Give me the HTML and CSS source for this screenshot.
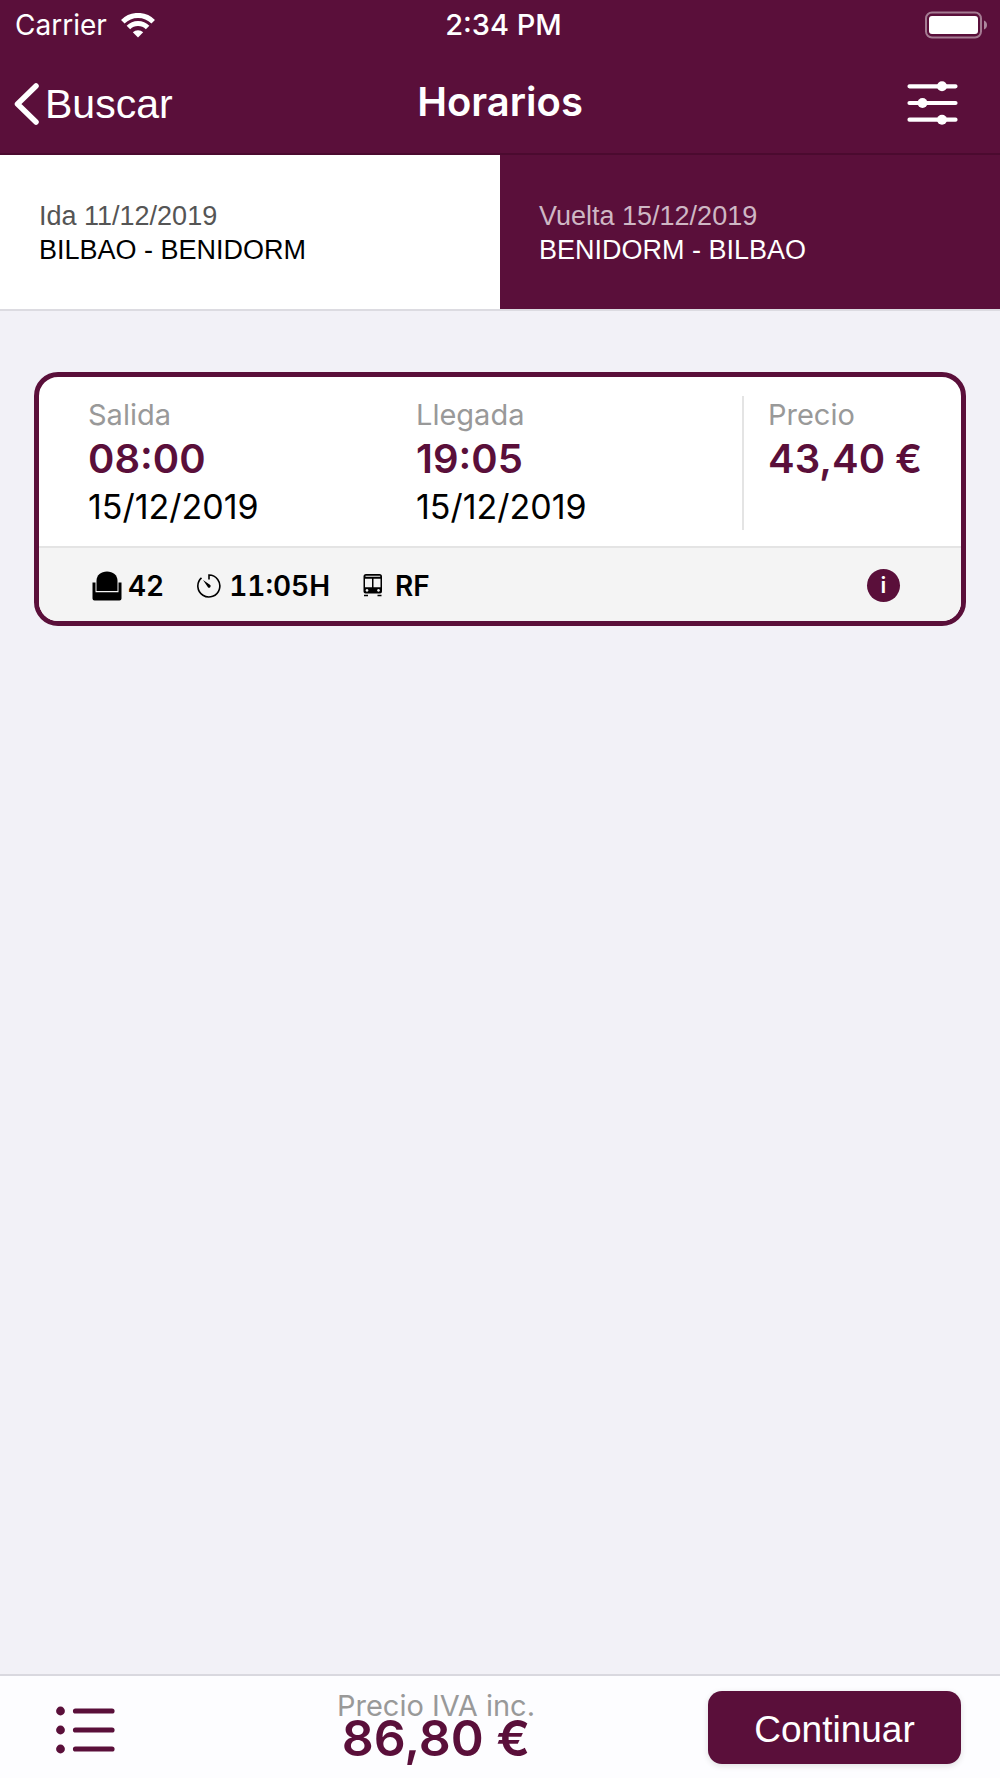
FILE: index.html
```html
<!DOCTYPE html>
<html lang="es">
<head>
<meta charset="utf-8">
<meta name="viewport" content="width=device-width, initial-scale=1">
<title>Horarios</title>
<link rel="stylesheet" href="styles.css">
</head>
<body>
<header class="header">
  <div class="status">
    <div class="carrier">
      <span>Carrier</span>
      <svg width="34" height="25" viewBox="0 0 34 25" aria-hidden="true">
        <g fill="none" stroke="#fff" stroke-width="5">
          <path d="M1.8 8.7a21.500 21.500 0 0 1 30.400 0"/>
          <path d="M7.400 14.400a13.600 13.600 0 0 1 19.200 0"/>
        </g>
        <path d="M17 24.500l-5.200-5.300a7.600 7.600 0 0 1 10.400 0z" fill="#fff"/>
      </svg>
    </div>
    <span class="clock">2:34 PM</span>
    <svg class="battery" width="64" height="28" viewBox="0 0 64 28" aria-hidden="true">
      <rect x="2" y="1.500" width="55" height="25" rx="6" fill="none" stroke="#fff" stroke-opacity=".45" stroke-width="2"/>
      <rect x="5" y="5" width="49" height="18" rx="3" fill="#fff"/>
      <path d="M60 9.500q3 1.200 3 4.500t-3 4.500z" fill="#fff" fill-opacity=".5"/>
    </svg>
  </div>
  <nav class="navbar">
    <a class="back" href="#buscar">
      <svg width="26" height="42" viewBox="0 0 26 42" aria-hidden="true"><path d="M23 3L4.500 21 23 39" fill="none" stroke="#fff" stroke-width="5.500" stroke-linecap="round" stroke-linejoin="round"/></svg>
      <span>Buscar</span>
    </a>
    <h1 class="title">Horarios</h1>
    <button class="icon-button filter" type="button" aria-label="Filtros">
      <svg width="52" height="44" viewBox="0 0 52 44">
        <path d="M2.500 5.300h46M2.500 22h46M2.500 38.700h46" stroke="#fff" stroke-width="4.200" stroke-linecap="round"/>
        <g fill="#fff"><circle cx="35" cy="5.300" r="5"/><circle cx="15.500" cy="22" r="5"/><circle cx="35" cy="38.700" r="5"/></g>
      </svg>
    </button>
  </nav>
</header>

<div class="tabs">
  <button class="tab" type="button"><span class="tab-date">Ida 11/12/2019</span><span>BILBAO - BENIDORM</span></button>
  <button class="tab tab-active" type="button"><span class="tab-date">Vuelta 15/12/2019</span><span>BENIDORM - BILBAO</span></button>
</div>

<main class="content">
  <article class="trip">
    <div class="trip-main">
      <div class="col"><span class="label">Salida</span><strong class="value">08:00</strong><span class="date">15/12/2019</span></div>
      <div class="col"><span class="label">Llegada</span><strong class="value">19:05</strong><span class="date">15/12/2019</span></div>
      <div class="col col-price"><span class="label">Precio</span><strong class="value">43,40 €</strong></div>
    </div>
    <div class="trip-info">
      <span class="fact seats">
        <svg width="30" height="30" viewBox="0 0 30 30" aria-hidden="true">
          <path d="M4.500 20V10C4.500 4 9 .500 15 .500S25.500 4 25.500 10v10z"/>
          <path d="M.500 11.500h3v9.800h23v-9.800h3V27.500a2 2 0 0 1-2 2H2.500a2 2 0 0 1-2-2z"/>
        </svg>
        42
      </span>
      <span class="fact duration">
        <svg width="24" height="24" viewBox="0 0 24 24" aria-hidden="true">
          <path d="M12 5.500V1a11 11 0 1 1-7.500 2.800" fill="none" stroke="#000" stroke-width="1.600"/>
          <path d="M6 6l7.300 5a1.700 1.700 0 0 1-2.200 2.500z"/>
        </svg>
        11:05H
      </span>
      <span class="fact bus">
        <svg width="20" height="23" viewBox="0 0 20 23" aria-hidden="true">
          <path fill-rule="evenodd" d="M3 0h13.500a2.500 2.500 0 0 1 2.500 2.500V17.500a2 2 0 0 1-2 2H2.500a2 2 0 0 1-2-2V2.500A2.500 2.500 0 0 1 3 0zM2.500 1.700v1h14.700v-1zM2 4.700v8.500h7V4.700zM10.500 4.700v8.500h7V4.700zM4 15a1.400 1.400 0 1 0 .01 0zM15.500 15a1.400 1.400 0 1 0 .01 0z"/>
          <path d="M1 20.700h4v1.600h-4zM14.500 20.700h4v1.600h-4z"/>
        </svg>
        RF
      </span>
      <button class="info" type="button" aria-label="Información">i</button>
    </div>
  </article>
</main>

<footer class="footer">
  <button class="icon-button list" type="button" aria-label="Detalle">
    <svg width="60" height="48" viewBox="0 0 60 48">
      <path d="M19.500 5h36.500M19.500 24h36.500M19.500 43h36.500" stroke="#5a0f3a" stroke-width="5.200" stroke-linecap="round"/>
      <g fill="#5a0f3a"><circle cx="4.500" cy="5" r="4.400"/><circle cx="4.500" cy="24" r="4.400"/><circle cx="4.500" cy="43" r="4.400"/></g>
    </svg>
  </button>
  <div class="total"><span class="total-label">Precio IVA inc.</span><strong class="total-value">86,80 €</strong></div>
  <button class="continue" type="button">Continuar</button>
</footer>
</body>
</html>
```
FILE: styles.css
```css
:root {
  --brand: #5a0f3a;
  --line: #e4e4e4;
  --muted: #999;
}

* {
  box-sizing: border-box;
}

body {
  margin: 0;
  min-height: 100vh;
  display: flex;
  flex-direction: column;
  background: #f2f1f7;
  color: #000;
  font-family: Inter, "Liberation Sans", sans-serif;
}

button {
  margin: 0;
  padding: 0;
  border: 0;
  font: inherit;
  color: inherit;
  cursor: pointer;
}

svg {
  display: block;
  flex: none;
}

.header {
  background: var(--brand);
  color: #fff;
  border-bottom: 2px solid #4b0a2f;
}

.status,
.navbar {
  display: grid;
  grid-template-columns: 1fr auto 1fr;
  align-items: center;
}

.status {
  height: 50px;
  padding: 0 12px 0 15px;
  font-size: 28px;
  line-height: 50px;
}

.carrier {
  display: flex;
  align-items: center;
  gap: 14px;
}

.clock {
  padding-left: 4px;
  font-size: 29px;
  font-weight: 500;
}

.battery,
.filter {
  justify-self: end;
}

.navbar {
  height: 103px;
  padding: 0 13px;
}

.back {
  display: flex;
  align-items: center;
  gap: 6px;
  padding-top: 4px;
  color: #fff;
  text-decoration: none;
  font: 41px/48px "Liberation Sans", sans-serif;
}

.title {
  margin: 0;
  font-size: 40px;
  line-height: 48px;
  font-weight: 600;
}

.icon-button {
  background: none;
}

.filter {
  padding: 3px 28px 0 0;
}

.tabs {
  display: grid;
  grid-template-columns: 1fr 1fr;
  border-bottom: 2px solid #dcdbe1;
}

.tab {
  display: flex;
  flex-direction: column;
  padding: 44px 39px 42px;
  background: #fff;
  text-align: left;
  font: 27px/34px "Liberation Sans", sans-serif;
}

.tab-date {
  color: #555;
}

.tab-active {
  background: var(--brand);
  color: #fff;
}

.tab-active .tab-date {
  color: #ceb7c4;
}

.content {
  flex: 1;
  padding: 61px 34px;
}

.trip {
  overflow: hidden;
  background: #fff;
  border: 5px solid var(--brand);
  border-radius: 24px;
}

.trip-main {
  display: grid;
  grid-template-columns: 328fr 326fr 219fr;
  padding: 19px 0 16px 49px;
}

.col {
  display: flex;
  flex-direction: column;
}

.col-price {
  padding-left: 24px;
  border-left: 2px solid var(--line);
}

.label {
  font-size: 29px;
  line-height: 38px;
  color: var(--muted);
}

.value {
  font-size: 40px;
  line-height: 50px;
  font-weight: 600;
  color: var(--brand);
}

.date {
  font-size: 34px;
  line-height: 46px;
}

.trip-info {
  display: flex;
  align-items: center;
  gap: 33px;
  height: 75px;
  padding: 2px 61px 0 53px;
  background: #f4f4f4;
  border-top: 2px solid var(--line);
  font-size: 28px;
  line-height: 34px;
  font-weight: 600;
  font-variant-numeric: tabular-nums;
}

.fact {
  display: flex;
  align-items: center;
}

.seats {
  gap: 6px;
}

.duration {
  gap: 8px;
}

.bus {
  gap: 12px;
}

.info {
  width: 33px;
  height: 33px;
  margin-left: auto;
  border-radius: 50%;
  background: var(--brand);
  color: #fff;
  font-size: 22px;
  line-height: 33px;
  text-align: center;
}

.footer {
  display: grid;
  grid-template-columns: 300fr 272fr 428fr;
  align-items: start;
  height: 104px;
  padding-top: 15px;
  background: #fdfdff;
  border-top: 2px solid #d9d8df;
}

.list {
  justify-self: start;
  padding: 15px 0 0 56px;
}

.total {
  display: flex;
  flex-direction: column;
  align-items: center;
  white-space: nowrap;
}

.total-label {
  font-size: 29px;
  line-height: 30px;
  color: var(--muted);
}

.total-value {
  font-size: 50px;
  line-height: 34px;
  font-weight: 600;
  color: var(--brand);
}

.continue {
  justify-self: end;
  width: 253px;
  height: 73px;
  margin-right: 39px;
  padding-top: 5px;
  border-radius: 14px;
  background: var(--brand);
  box-shadow: 0 2px 6px rgba(0, 0, 0, 0.12);
  color: #fff;
  font: 37px/44px "Liberation Sans", sans-serif;
}
```
